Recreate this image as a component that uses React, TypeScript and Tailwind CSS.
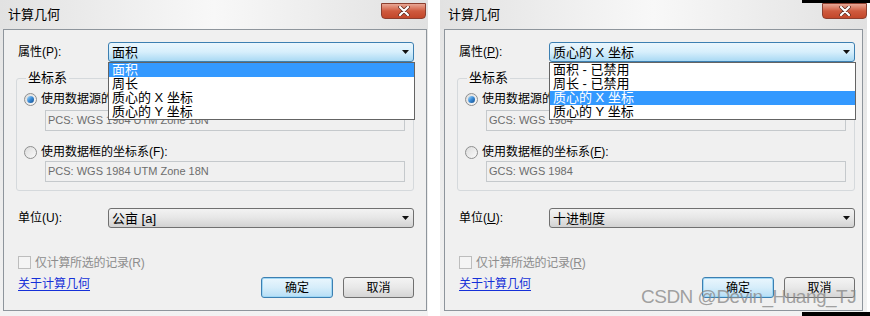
import React from 'react';

const font = "font-['Liberation_Sans','Noto_Sans_CJK_SC',sans-serif]";

function Arrow() {
  return (
    <svg width="7" height="4" viewBox="0 0 7 4" className="shrink-0">
      <path d="M0 0h7L3.5 4z" fill="#111" />
    </svg>
  );
}

function Key({ k, on }: { k: string; on: boolean }) {
  return <>({on ? <span className="underline underline-offset-1">{k}</span> : k})</>;
}

function Combo({ text, active, children }: { text: string; active?: boolean; children?: React.ReactNode }) {
  return (
    <div className="relative flex-1">
      <div
        className={`flex h-[20px] items-center justify-between rounded-[3px] border pl-[3px] pr-[4px] text-[13px] leading-none text-black ${
          active
            ? 'border-[#3c7fb1] bg-linear-to-b from-[#eaf6fd] via-[#d7effc] to-[#a9d9f4]'
            : 'border-[#707070] bg-linear-to-b from-[#f3f3f3] via-[#e6e6e6] to-[#d2d2d2]'
        }`}
      >
        <span>{text}</span>
        <Arrow />
      </div>
      {children}
    </div>
  );
}

function Radio({ on }: { on?: boolean }) {
  return (
    <span className="flex h-[13px] w-[13px] shrink-0 items-center justify-center rounded-full border border-[#8e8f8f] bg-linear-to-br from-[#dcdcdc] to-[#fafafa]">
      {on && <span className="h-[7px] w-[7px] rounded-full bg-linear-to-br from-[#aee0fa] via-[#3a8bd6] to-[#17508f]" />}
    </span>
  );
}

function Field({ text }: { text: string }) {
  return (
    <div className="ml-[21px] mr-[8px] flex h-[21px] items-center border border-[#c5c9cc] bg-[#f0f0f0] px-[2px] text-[11px] leading-none text-[#6d6d6d]">
      {text}
    </div>
  );
}

type Props = {
  keys: boolean;
  value: string;
  items: string[];
  selected: number;
  cs1: string;
  cs2: string;
  unit: string;
  outer: string;
  panel: string;
  closeMr: string;
};

function Dialog({ keys, value, items, selected, cs1, cs2, unit, outer, panel, closeMr }: Props) {
  return (
    <div className={`flex h-[316px] flex-col bg-linear-to-b from-[#e4e4e4] to-[#f2f2f2] ${outer}`}>
      <div className="flex h-[29px] items-start justify-between bg-linear-to-r from-[#e2e2e2] via-[#f8f8f8] to-[#e1e1e1]">
        <span className="pl-[8px] pt-[7px] text-[13px] leading-[16px] text-black">计算几何</span>
        <div
          className={`mt-[3px] flex h-[16px] w-[45px] items-center justify-center rounded-b-[4px] border border-[#8c3f2f] bg-linear-to-b from-[#e8a795] via-[#cf5a3e] to-[#c2472a] ${closeMr}`}
        >
          <svg width="12" height="10" viewBox="0 0 12 10">
            <path d="M2 1l8 8M10 1L2 9" stroke="#5a2a20" strokeWidth="3.6" strokeLinecap="round" />
            <path d="M2 1l8 8M10 1L2 9" stroke="#fff" strokeWidth="2.2" strokeLinecap="round" />
          </svg>
        </div>
      </div>
      <div className={`flex h-[282px] flex-col border border-[#8e959c] bg-[#f0f0f0] pl-[12px] pt-[12px] text-[12px] leading-none text-black ${panel}`}>
        <div className="flex items-center pl-[2px]">
          <span className="w-[90px]">
            属性<Key k="P" on={keys} />:
          </span>
          <Combo text={value} active>
            <div className="absolute left-0 right-[-1px] top-full z-10 flex flex-col border border-[#646464] bg-white text-[13px] leading-[14px]">
              {items.map((it, i) => (
                <div key={it} className={`h-[14px] whitespace-nowrap pl-[3px] ${i === selected ? 'bg-[#3399ff] text-white' : 'text-black'}`}>
                  {it}
                </div>
              ))}
            </div>
          </Combo>
        </div>

        <div className="relative mt-[16px] h-[113px] rounded-[3px] border border-[#d5d9dc] pl-[7px] pt-[13px]">
          <span className="absolute left-[9px] top-[-8px] bg-[#f0f0f0] px-[2px] text-[13px] leading-[14px]">坐标系</span>
          <div className="flex h-[14px] items-center gap-[4px]">
            <Radio on />
            <span>使用数据源的坐标系(S):</span>
          </div>
          <div className="mt-[4px]">
            <Field text={cs1} />
          </div>
          <div className="mt-[14px] flex h-[14px] items-center gap-[4px]">
            <Radio />
            <span>
              使用数据框的坐标系<Key k="F" on={keys} />:
            </span>
          </div>
          <div className="mt-[2px]">
            <Field text={cs2} />
          </div>
        </div>

        <div className="mt-[17px] flex items-center pl-[2px]">
          <span className="w-[90px]">
            单位<Key k="U" on={keys} />:
          </span>
          <Combo text={unit} />
        </div>

        <div className="mt-[28px] flex h-[13px] items-center gap-[4px] pl-[2px] text-[#8d8d8d]">
          <span className="h-[13px] w-[13px] border border-[#bdbdbd] bg-[#f4f4f4]" />
          <span className="tracking-[-0.3px]">
            仅计算所选的记录<Key k="R" on={keys} />
          </span>
        </div>

        <div className="mt-[8px] flex items-start pl-[2px]">
          <span className="mt-[1px] text-[#1530d8] underline underline-offset-2">关于计算几何</span>
          <div className="ml-auto flex gap-[10px]">
            <div className="flex h-[21px] w-[72px] items-center justify-center rounded-[3px] border border-[#3c7fb1] bg-linear-to-b from-[#eaf6fd] via-[#d6edfa] to-[#b6def5] shadow-[inset_0_0_0_1px_#9fd7f5]">
              确定
            </div>
            <div className="flex h-[21px] w-[71px] items-center justify-center rounded-[3px] border border-[#707070] bg-linear-to-b from-[#f4f4f4] via-[#e8e8e8] to-[#d5d5d5]">
              取消
            </div>
          </div>
        </div>
      </div>
    </div>
  );
}

export default function App() {
  return (
    <div className={`relative flex h-[316px] w-[870px] overflow-hidden bg-white ${font}`}>
      <Dialog
        keys={false}
        value="面积"
        items={['面积', '周长', '质心的 X 坐标', '质心的 Y 坐标']}
        selected={0}
        cs1="PCS: WGS 1984 UTM Zone 18N"
        cs2="PCS: WGS 1984 UTM Zone 18N"
        unit="公亩 [a]"
        outer="w-[428px]"
        panel="ml-[3px] mr-[1px] pr-[12px]"
        closeMr="mr-[2px]"
      />
      <div className="w-[12px]" />
      <Dialog
        keys
        value="质心的 X 坐标"
        items={['面积 - 已禁用', '周长 - 已禁用', '质心的 X 坐标', '质心的 Y 坐标']}
        selected={2}
        cs1="GCS: WGS 1984"
        cs2="GCS: WGS 1984"
        unit="十进制度"
        outer="w-[427px]"
        panel="ml-[4px] mr-[4px] pr-[7px]"
        closeMr="mr-[0px]"
      />
      <div className="absolute right-0 top-0 h-[3px] w-[68px] bg-black" />
      <div className="absolute bottom-0 right-0 h-[4px] w-[68px] bg-black" />
      <span className="pointer-events-none absolute left-[641px] top-[287px] text-[19px] leading-none tracking-[-0.5px] text-[#8a8a8a]/80 font-['Liberation_Sans',sans-serif]">
        CSDN @Devin_Huang_TJ
      </span>
    </div>
  );
}
